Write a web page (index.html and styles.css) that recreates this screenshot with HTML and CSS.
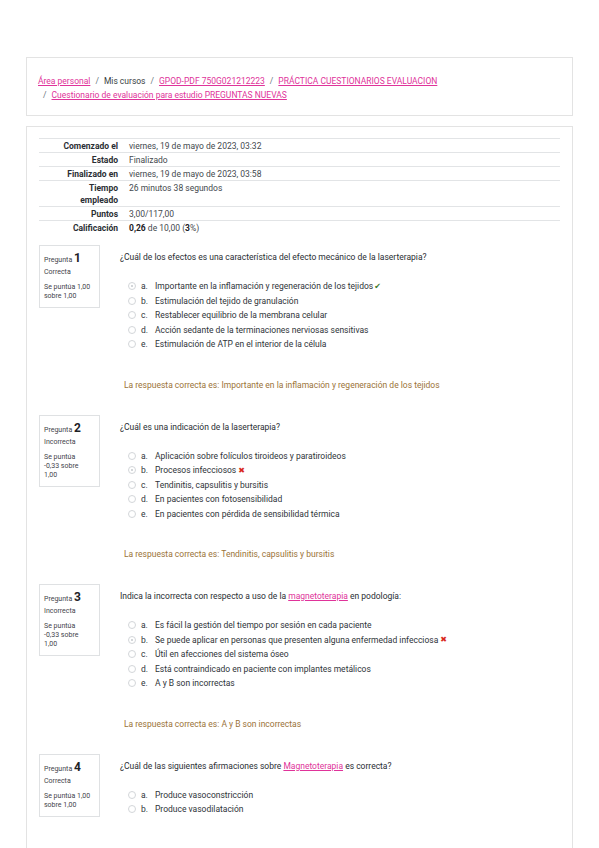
FILE: index.html
```html
<!DOCTYPE html>
<html lang="es">
<head>
<meta charset="utf-8">
<title>Cuestionario de evaluación</title>
<link rel="stylesheet" href="styles.css">
</head>
<body>
<div class="page">
  <div class="card bc-card">
    <ol class="breadcrumb">
      <li><a href="#">Área personal</a></li>
      <li><span>Mis cursos</span></li>
      <li><a href="#">GPOD-PDF 750G021212223</a></li>
      <li><a href="#">PRÁCTICA CUESTIONARIOS EVALUACION</a></li>
      <li><a href="#">Cuestionario de evaluación para estudio PREGUNTAS NUEVAS</a></li>
    </ol>
  </div>

  <div class="card main">
    <table class="summary">
      <colgroup><col class="c-label"><col></colgroup>
      <tr><th>Comenzado el</th><td>viernes, 19 de mayo de 2023, 03:32</td></tr>
      <tr><th>Estado</th><td>Finalizado</td></tr>
      <tr><th>Finalizado en</th><td>viernes, 19 de mayo de 2023, 03:58</td></tr>
      <tr><th>Tiempo empleado</th><td>26 minutos 38 segundos</td></tr>
      <tr><th>Puntos</th><td>3,00/117,00</td></tr>
      <tr><th>Calificación</th><td><b>0,26</b> de 10,00 (<b>3</b>%)</td></tr>
    </table>

    <div class="que">
      <div class="info">
        <div class="qno">Pregunta <b>1</b></div>
        <div class="state">Correcta</div>
        <div class="grade">Se puntúa 1,00 sobre 1,00</div>
      </div>
      <div class="content">
        <div class="qtext">¿Cuál de los efectos es una característica del efecto mecánico de la laserterapia?</div>
        <div class="answer">
          <div class="opt"><span class="radio checked"></span><span class="let">a.</span><span>Importante en la inflamación y regeneración de los tejidos</span><span class="ok">✔</span></div>
          <div class="opt"><span class="radio"></span><span class="let">b.</span><span>Estimulación del tejido de granulación</span></div>
          <div class="opt"><span class="radio"></span><span class="let">c.</span><span>Restablecer equilibrio de la membrana celular</span></div>
          <div class="opt"><span class="radio"></span><span class="let">d.</span><span>Acción sedante de la terminaciones nerviosas sensitivas</span></div>
          <div class="opt"><span class="radio"></span><span class="let">e.</span><span>Estimulación de ATP en el interior de la célula</span></div>
        </div>
        <div class="feedback">La respuesta correcta es: Importante en la inflamación y regeneración de los tejidos</div>
      </div>
    </div>

    <div class="que">
      <div class="info">
        <div class="qno">Pregunta <b>2</b></div>
        <div class="state">Incorrecta</div>
        <div class="grade">Se puntúa -0,33 sobre 1,00</div>
      </div>
      <div class="content">
        <div class="qtext">¿Cuál es una indicación de la laserterapia?</div>
        <div class="answer">
          <div class="opt"><span class="radio"></span><span class="let">a.</span><span>Aplicación sobre folículos tiroideos y paratiroideos</span></div>
          <div class="opt"><span class="radio checked"></span><span class="let">b.</span><span>Procesos infecciosos</span><span class="bad">✖</span></div>
          <div class="opt"><span class="radio"></span><span class="let">c.</span><span>Tendinitis, capsulitis y bursitis</span></div>
          <div class="opt"><span class="radio"></span><span class="let">d.</span><span>En pacientes con fotosensibilidad</span></div>
          <div class="opt"><span class="radio"></span><span class="let">e.</span><span>En pacientes con pérdida de sensibilidad térmica</span></div>
        </div>
        <div class="feedback">La respuesta correcta es: Tendinitis, capsulitis y bursitis</div>
      </div>
    </div>

    <div class="que">
      <div class="info">
        <div class="qno">Pregunta <b>3</b></div>
        <div class="state">Incorrecta</div>
        <div class="grade">Se puntúa -0,33 sobre 1,00</div>
      </div>
      <div class="content">
        <div class="qtext">Indica la incorrecta con respecto a uso de la <a href="#">magnetoterapia</a> en podología:</div>
        <div class="answer">
          <div class="opt"><span class="radio"></span><span class="let">a.</span><span>Es fácil la gestión del tiempo por sesión en cada paciente</span></div>
          <div class="opt"><span class="radio checked"></span><span class="let">b.</span><span>Se puede aplicar en personas que presenten alguna enfermedad infecciosa</span><span class="bad">✖</span></div>
          <div class="opt"><span class="radio"></span><span class="let">c.</span><span>Útil en afecciones del sistema óseo</span></div>
          <div class="opt"><span class="radio"></span><span class="let">d.</span><span>Está contraindicado en paciente con implantes metálicos</span></div>
          <div class="opt"><span class="radio"></span><span class="let">e.</span><span>A y B son incorrectas</span></div>
        </div>
        <div class="feedback">La respuesta correcta es: A y B son incorrectas</div>
      </div>
    </div>

    <div class="que">
      <div class="info">
        <div class="qno">Pregunta <b>4</b></div>
        <div class="state">Correcta</div>
        <div class="grade">Se puntúa 1,00 sobre 1,00</div>
      </div>
      <div class="content">
        <div class="qtext">¿Cuál de las siguientes afirmaciones sobre <a href="#">Magnetoterapia</a> es correcta?</div>
        <div class="answer">
          <div class="opt"><span class="radio"></span><span class="let">a.</span><span>Produce vasoconstricción</span></div>
          <div class="opt"><span class="radio"></span><span class="let">b.</span><span>Produce vasodilatación</span></div>
        </div>
      </div>
    </div>
  </div>
</div>
</body>
</html>
```

FILE: styles.css
```css
html, body {
  margin: 0;
  padding: 0;
  background: #ffffff;
}

body {
  font-family: Roboto, "Liberation Sans", Arial, sans-serif;
  font-size: 8.5px;
  color: #2a2e33;
}

.page {
  padding: 57px 26px 0;
}

a {
  color: #e0339a;
  text-decoration: underline;
}

.card {
  border: 1px solid #e3e3e3;
  background: #fff;
}

.bc-card {
  padding: 16px 11px 13px;
  margin-bottom: 10px;
}

.breadcrumb {
  list-style: none;
  margin: 0;
  padding: 0;
  display: flex;
  flex-wrap: wrap;
  line-height: 14px;
  color: #3a3f44;
}

.breadcrumb li + li {
  padding-left: 5px;
}

.breadcrumb li + li::before {
  content: "/";
  padding-right: 5px;
  color: #6a737b;
}

.main {
  padding: 11px 12px 40px;
}

.summary {
  width: 100%;
  border-collapse: collapse;
  table-layout: fixed;
}

.c-label {
  width: 84px;
}

.summary th,
.summary td {
  border-top: 1px solid #e2e4e6;
  padding: 0.5px 5px;
  line-height: 12px;
  vertical-align: top;
  font-size: 8.5px;
}

.summary th {
  text-align: right;
  font-weight: 700;
  padding-left: 17px;
  color: #2a2e33;
}

.summary td {
  padding-left: 6px;
  color: #44494e;
}

.summary td b {
  color: #1d2125;
}

.que {
  display: flex;
  gap: 20px;
  margin-top: 11px;
  margin-bottom: 24px;
}

.info {
  flex: 0 0 61px;
  box-sizing: border-box;
  align-self: flex-start;
  border: 1px solid #dfe1e3;
  padding: 5px 4px 6px;
  color: #3f444a;
}

.qno {
  font-size: 7px;
  line-height: 14px;
}

.qno b {
  font-size: 12px;
  color: #1d2125;
}

.state {
  font-size: 7px;
  line-height: 11px;
  margin-bottom: 5px;
}

.grade {
  font-size: 7px;
  line-height: 9px;
  width: 47px;
}

.content {
  flex: 1;
  padding-top: 6px;
}

.qtext {
  line-height: 12px;
  margin-bottom: 16px;
}

.opt {
  display: flex;
  align-items: center;
  height: 14.5px;
  padding-left: 8px;
  color: #2f3439;
}

.radio {
  width: 6px;
  height: 6px;
  border: 1px solid #d3d6d9;
  border-radius: 50%;
  box-sizing: content-box;
  position: relative;
  flex: 0 0 auto;
  margin-right: 5px;
}

.radio.checked::after {
  content: "";
  position: absolute;
  left: 2px;
  top: 2px;
  width: 2px;
  height: 2px;
  border-radius: 50%;
  background: #c4c8cc;
}

.let {
  width: 14px;
  flex: 0 0 14px;
}

.ok {
  color: #3b7a2a;
  font-family: "DejaVu Sans", sans-serif;
  font-size: 8px;
  margin-left: 1px;
}

.bad {
  color: #d9291c;
  font-family: "DejaVu Sans", sans-serif;
  font-size: 8px;
  margin-left: 2px;
}

.feedback {
  margin-top: 27px;
  padding-left: 4px;
  line-height: 12px;
  color: #9b7338;
}
```
